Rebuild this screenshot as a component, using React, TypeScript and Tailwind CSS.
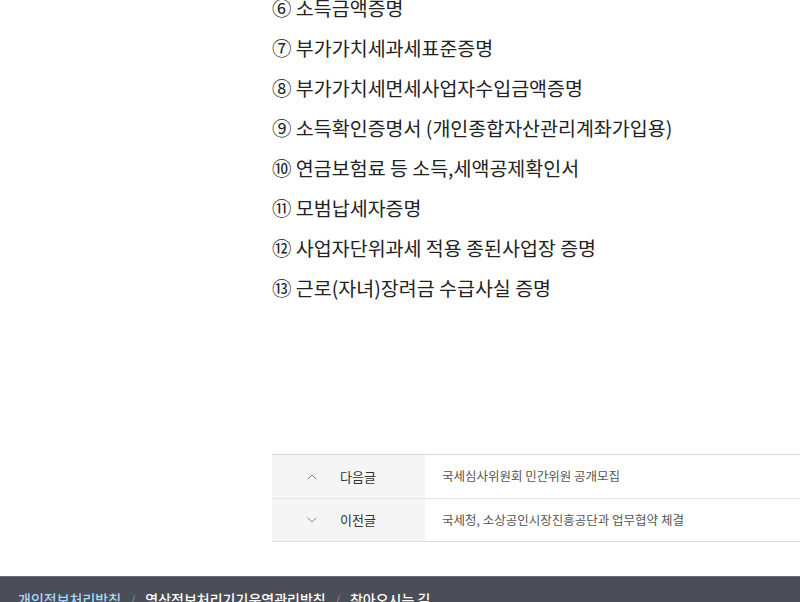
import { ChevronUp, ChevronDown } from "lucide-react";

const items = [
  "⑥ 소득금액증명",
  "⑦ 부가가치세과세표준증명",
  "⑧ 부가가치세면세사업자수입금액증명",
  "⑨ 소득확인증명서 (개인종합자산관리계좌가입용)",
  "⑩ 연금보험료 등 소득,세액공제확인서",
  "⑪ 모범납세자증명",
  "⑫ 사업자단위과세 적용 종된사업장 증명",
  "⑬ 근로(자녀)장려금 수급사실 증명",
];

const nav = [
  { dir: "up", label: "다음글", title: "국세심사위원회 민간위원 공개모집" },
  { dir: "down", label: "이전글", title: "국세청, 소상공인시장진흥공단과 업무협약 체결" },
];

export default function App() {
  return (
    <div className="h-[602px] w-[800px] overflow-hidden bg-white font-['Noto_Sans_CJK_KR',sans-serif]">
      <main className="flex h-[576px] flex-col pl-[272px]">
        <ul className="-mt-[12px] text-[19.5px] leading-[40px] text-[#222]">
          {items.map((t) => (
            <li key={t} className="whitespace-nowrap">
              {t}
            </li>
          ))}
        </ul>

        <div className="mt-[146px] border-t border-[#d5d5d5] border-b border-b-[#dcdcdc]">
          {nav.map((n, i) => (
            <div
              key={n.label}
              className={`flex h-[43px] items-center ${i > 0 ? "border-t border-[#e6e6e6]" : ""}`}
            >
              <div className="flex h-full w-[153px] items-center bg-[#f5f5f5]">
                {n.dir === "up" ? (
                  <ChevronUp className="ml-[32px] h-4 w-4 text-[#888]" strokeWidth={1.5} />
                ) : (
                  <ChevronDown className="ml-[32px] h-4 w-4 text-[#888]" strokeWidth={1.5} />
                )}
                <span className="ml-[20px] text-[13px] text-[#333]">{n.label}</span>
              </div>
              <span className="ml-[17px] text-[12.5px] text-[#555]">{n.title}</span>
            </div>
          ))}
        </div>
      </main>

      <footer className="h-[26px] border-t border-[#6a6c75] bg-[#4b4d57] pl-[18px] pt-[12px]">
        <div className="flex items-center whitespace-nowrap text-[14px] font-medium leading-[20px]">
          <span className="text-[#a6d8f7]">개인정보처리방침</span>
          <span className="mx-[10px] text-[11px] text-[#8a8c94]">/</span>
          <span className="text-white">영상정보처리기기운영관리방침</span>
          <span className="mx-[10px] text-[11px] text-[#8a8c94]">/</span>
          <span className="text-white">찾아오시는 길</span>
        </div>
      </footer>
    </div>
  );
}
